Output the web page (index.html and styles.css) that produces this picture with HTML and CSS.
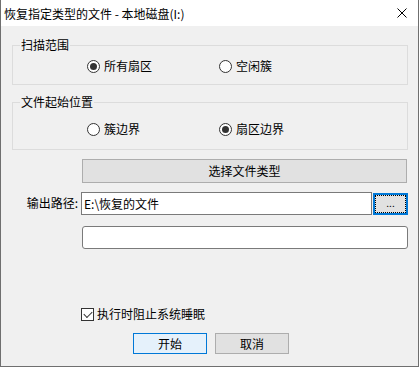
FILE: index.html
```html
<!DOCTYPE html>
<html lang="zh-CN">
<head>
    <meta charset="UTF-8">
    <title>恢复指定类型的文件 - 本地磁盘(I:)</title>
    <link rel="stylesheet" href="styles.css">
</head>
<body>
    <div class="window">
        <div class="titlebar">
            <span class="title">恢复指定类型的文件 - 本地磁盘(I:)</span>
            <svg class="close" width="10" height="10" viewBox="0 0 10 10">
                <path d="M0.5 0.5 L9.5 9.5 M9.5 0.5 L0.5 9.5" stroke="#000" stroke-width="1" fill="none"/>
            </svg>
        </div>

        <div class="content">
            <fieldset class="group group-scan">
                <legend>扫描范围</legend>
                <div class="radio-row">
                    <label class="radio"><input type="radio" name="scan" checked><span>所有扇区</span></label>
                    <label class="radio"><input type="radio" name="scan"><span>空闲簇</span></label>
                </div>
            </fieldset>

            <fieldset class="group group-start">
                <legend>文件起始位置</legend>
                <div class="radio-row">
                    <label class="radio"><input type="radio" name="start"><span>簇边界</span></label>
                    <label class="radio"><input type="radio" name="start" checked><span>扇区边界</span></label>
                </div>
            </fieldset>

            <button class="btn btn-types" type="button">选择文件类型</button>

            <div class="path-row">
                <label class="path-label" for="outPath">输出路径:</label>
                <input class="path-input" id="outPath" type="text" value="E:\恢复的文件">
                <button class="btn-browse" type="button"><span class="focus">...</span></button>
            </div>

            <input class="status-box" type="text">

            <label class="check">
                <input type="checkbox" checked><span>执行时阻止系统睡眠</span>
            </label>

            <div class="actions">
                <button class="btn btn-default" type="button">开始</button>
                <button class="btn" type="button">取消</button>
            </div>
        </div>
    </div>
</body>
</html>
```

FILE: styles.css
```css
* {
    box-sizing: border-box;
}
body {
    margin: 0;
    font-family: "Noto Sans CJK SC", "Noto Sans", sans-serif;
    font-size: 12px;
    line-height: 16px;
    color: #000;
    background-color: #fff;
}
.window {
    width: 419px;
    height: 367px;
    border: 1px solid #6f6f6f;
    border-top: none;
    display: flex;
    flex-direction: column;
    background-color: #f0f0f0;
}
.titlebar {
    height: 26px;
    background-color: #fff;
    display: flex;
    align-items: center;
    padding: 0 10px 0 3px;
}
.title {
    flex: 1;
    padding-top: 1px;
}
.close {
    display: block;
    margin-right: 1px;
}
.content {
    flex: 1;
    padding: 11px 10px 0 11px;
    display: flex;
    flex-direction: column;
    align-items: flex-start;
}

/* group boxes */
.group {
    width: 396px;
    margin: 0;
    border: 1px solid #dcdcdc;
    padding: 5px 0 10px 0;
}
.group legend {
    margin-left: 7px;
    padding: 0 1px;
    line-height: 16px;
}
.group-start {
    margin-top: 9px;
    padding: 11px 0 12px 0;
}
.radio-row {
    display: flex;
    padding-left: 74px;
}
.radio {
    width: 132px;
    display: flex;
    align-items: center;
    height: 16px;
}
.radio input {
    appearance: none;
    margin: 0 4px 0 0;
    width: 13px;
    height: 13px;
    border: 1px solid #333;
    border-radius: 50%;
    background-color: #fff;
    display: grid;
    place-items: center;
}
.radio input:checked::after {
    content: "";
    width: 7px;
    height: 7px;
    border-radius: 50%;
    background-color: #333;
}

/* buttons */
.btn {
    font: inherit;
    color: #000;
    background-color: #e1e1e1;
    border: 1px solid #adadad;
    padding: 0;
    width: 74px;
    height: 21px;
}
.btn-types {
    margin: 9px 0 0 70px;
    width: 325px;
    height: 24px;
}
.btn-default {
    background-color: #e5f1fb;
    border-color: #0078d7;
}

/* output path */
.path-row {
    margin-top: 9px;
    display: flex;
    align-items: center;
    width: 396px;
}
.path-label {
    width: 69px;
    text-align: right;
    padding-right: 3px;
    padding-bottom: 1px;
}
.path-input {
    width: 291px;
    height: 23px;
    border: 1px solid #7a7a7a;
    font: inherit;
    padding: 0 2px;
    background-color: #fff;
    color: #000;
}
.btn-browse {
    margin-left: 1px;
    width: 35px;
    height: 22px;
    padding: 0;
    border: 2px solid #0078d7;
    background-color: #e1e1e1;
    font: inherit;
    color: #000;
}
.btn-browse .focus {
    display: block;
    height: 100%;
    border: 1px dotted #000;
    line-height: 14px;
    font-size: 10px;
}
.status-box {
    margin: 11px 0 0 70px;
    width: 326px;
    height: 23px;
    border: 1px solid #7a7a7a;
    border-radius: 3px;
    background-color: #fff;
}

/* checkbox */
.check {
    margin: 57px 0 0 69px;
    display: flex;
    align-items: center;
    height: 16px;
}
.check input {
    appearance: none;
    margin: 0 3px 0 0;
    width: 13px;
    height: 13px;
    border: 1px solid #333;
    background-color: #fff;
    display: grid;
    place-items: center;
}
.check input:checked::after {
    content: "";
    width: 7px;
    height: 4px;
    border-left: 1px solid #333;
    border-bottom: 1px solid #333;
    transform: translateY(-1px) rotate(-45deg);
}

.actions {
    margin: 11px 0 0 121px;
    display: flex;
    gap: 8px;
}
```
